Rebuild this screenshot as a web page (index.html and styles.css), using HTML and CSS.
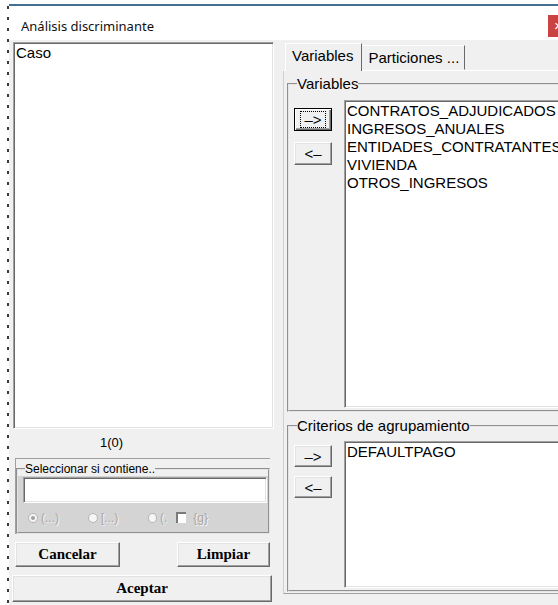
FILE: index.html
```html
<!DOCTYPE html>
<html lang="es">
<head>
<meta charset="utf-8">
<title>Análisis discriminante</title>
<link rel="stylesheet" href="styles.css">
</head>
<body>
<div class="desk">
  <div class="edge"></div>
  <div class="window">
    <div class="titlebar">
      <span class="title">Análisis discriminante</span>
      <span class="close">×</span>
    </div>
    <div class="client">
      <div class="left">
        <div class="listbox sunken cases">
          <div class="item">Caso</div>
        </div>
        <div class="count">1(0)</div>
        <div class="filter-panel">
          <fieldset class="filter">
            <legend>Seleccionar si contiene..</legend>
            <div class="filter-body">
              <div class="textbox sunken"></div>
              <div class="options">
                <span class="opt"><span class="radio on"></span><span class="dim">(...)</span></span>
                <span class="opt"><span class="radio"></span><span class="dim">[...)</span></span>
                <span class="opt"><span class="radio"></span><span class="dim">(.</span><span class="check"></span><span class="dim g">{g}</span></span>
              </div>
            </div>
          </fieldset>
        </div>
        <div class="btn-row">
          <button class="btn cancel">Cancelar</button>
          <button class="btn clear">Limpiar</button>
        </div>
        <button class="btn accept">Aceptar</button>
      </div>
      <div class="right">
        <div class="tabs">
          <span class="tab active">Variables</span>
          <span class="tab">Particiones ...</span>
        </div>
        <div class="tabpanel">
          <fieldset class="group vars">
            <legend>Variables</legend>
            <div class="group-body">
              <div class="movers">
                <button class="mv default"><span class="focus">–&gt;</span></button>
                <button class="mv">&lt;–</button>
              </div>
              <div class="listbox sunken">
                <div class="item">CONTRATOS_ADJUDICADOS</div>
                <div class="item">INGRESOS_ANUALES</div>
                <div class="item">ENTIDADES_CONTRATANTES</div>
                <div class="item">VIVIENDA</div>
                <div class="item">OTROS_INGRESOS</div>
              </div>
            </div>
          </fieldset>
          <fieldset class="group crit">
            <legend>Criterios de agrupamiento</legend>
            <div class="group-body">
              <div class="movers">
                <button class="mv">–&gt;</button>
                <button class="mv">&lt;–</button>
              </div>
              <div class="listbox sunken">
                <div class="item">DEFAULTPAGO</div>
              </div>
            </div>
          </fieldset>
        </div>
      </div>
    </div>
  </div>
</div>
</body>
</html>
```
FILE: styles.css
```css
* { box-sizing: border-box; }

body {
  margin: 0;
  background: #fff;
  overflow: hidden;
  font-family: "Liberation Sans", Arial, sans-serif;
  font-size: 15px;
  color: #000;
}

.desk {
  display: flex;
  width: 620px;
  height: 605px;
}

/* dotted edge of the window behind */
.edge {
  width: 2px;
  margin: 6px 0 0 7px;
  background: repeating-linear-gradient(to bottom, #3a3a3a 0 3px, transparent 3px 11px);
}

.window {
  width: 585px;
  flex: none;
  margin-top: 4px;
  border-top: 2px solid #456f90;
  display: flex;
  flex-direction: column;
}

.titlebar {
  height: 34px;
  background: #fff;
  display: flex;
  align-items: flex-start;
}

.title {
  padding: 11px 0 0 12px;
  font: 13px/18px "Noto Sans", "Open Sans", sans-serif;
  color: #111;
}

.close {
  margin-left: auto;
  margin-top: 9px;
  width: 46px;
  height: 22px;
  background: #c94343;
  color: #fff;
  font: 15px/22px "Liberation Sans", sans-serif;
  padding-left: 6px;
}

.client {
  flex: 1;
  background: #f0f0f0;
  display: flex;
  padding-left: 3px;
}

/* 3D frames */
.sunken {
  border: 1px solid;
  border-color: #a0a0a0 #fff #fff #a0a0a0;
  box-shadow: inset 1px 1px 0 #696969, inset -1px -1px 0 #e3e3e3;
  background: #fff;
}

.btn, .mv {
  font: inherit;
  background: #f0f0f0;
  border: 1px solid;
  border-color: #fff #696969 #696969 #fff;
  box-shadow: inset -1px -1px 0 #a0a0a0, inset 1px 1px 0 #e3e3e3;
  padding: 0;
  color: #000;
}

/* left column */
.left {
  width: 262px;
  display: flex;
  flex-direction: column;
}

.listbox {
  padding: 1px 2px;
  line-height: 18px;
  white-space: nowrap;
  overflow: hidden;
}

.cases {
  margin: 2px 0 0 1px;
  height: 387px;
}

.count {
  height: 28px;
  line-height: 28px;
  font-size: 13px;
  padding-left: 88px;
}

.filter-panel {
  margin: 1px 4px 0 3px;
  border-top: 1px solid #a0a0a0;
  border-left: 1px solid #a0a0a0;
  padding-top: 3px;
}

.filter {
  margin: 0;
  padding: 0;
  border: 2px groove #e4e4e4;
  min-width: 0;
}

.filter legend {
  font-size: 12px;
  line-height: 14px;
  padding: 0;
  margin-left: 7px;
}

.filter-body {
  background: #d4d4d4;
  padding: 1px 1px 0 5px;
}

.textbox {
  height: 26px;
}

.options {
  height: 29px;
  display: flex;
  align-items: center;
  padding-left: 5px;
}

.opt {
  width: 60px;
  display: inline-flex;
  align-items: center;
  font-size: 12px;
}

.radio {
  width: 10px;
  height: 10px;
  border-radius: 50%;
  background: #f6f6f6;
  border: 1px solid #b4b4b4;
  margin-right: 3px;
  display: inline-flex;
  align-items: center;
  justify-content: center;
}

.radio.on::after {
  content: "";
  width: 4px;
  height: 4px;
  border-radius: 50%;
  background: #a0a0a0;
}

.dim {
  color: #a8a8a8;
  text-shadow: 1px 1px 0 #f4f4f4;
}

.check {
  width: 11px;
  height: 11px;
  margin-left: 9px;
  background: #fff;
  border-top: 2px solid #7a7a7a;
  border-left: 2px solid #7a7a7a;
}

.dim.g {
  margin-left: 7px;
}

.btn-row {
  margin: 8px 4px 0 3px;
  display: flex;
  justify-content: space-between;
}

.btn {
  height: 25px;
  font: bold 15px "Liberation Serif", "Times New Roman", serif;
}

.cancel { width: 105px; }
.clear { width: 93px; }

.accept {
  margin-top: 8px;
  width: 260px;
  height: 27px;
}

/* right column with tabs */
.right {
  margin-left: 9px;
  flex: 1;
  padding-top: 3px;
  display: flex;
  flex-direction: column;
  height: 554px;
}

.tabs {
  display: flex;
  align-items: flex-end;
  padding-left: 2px;
}

.tab {
  background: #f0f0f0;
  border: 1px solid;
  border-color: #fff #696969 transparent #fff;
  line-height: 17px;
  white-space: nowrap;
}

.tab.active {
  position: relative;
  z-index: 1;
  height: 28px;
  margin-bottom: -1px;
  padding: 3px 8px 0 6px;
  border-bottom: none;
}

.tab:not(.active) {
  height: 25px;
  padding: 3px 5px 0 5px;
  border-left-color: #f0f0f0;
}

.tabpanel {
  flex: 1;
  border: 1px solid;
  border-color: #fff #a0a0a0 #a0a0a0 #d0d0d0;
  padding: 4px 0 1px 3px;
}

.group {
  margin: 0;
  padding: 0 0 2px 3px;
  border: 2px groove #e4e4e4;
  border-right: none;
  min-width: 0;
}

.group legend {
  line-height: 17px;
  padding: 0;
  margin-left: 5px;
}

.group-body {
  display: flex;
}

.movers {
  width: 38px;
  margin-left: 2px;
  display: flex;
  flex-direction: column;
}

.mv {
  height: 23px;
  font: 15px "Liberation Sans", Arial, sans-serif;
  line-height: 19px;
}

.group-body .listbox {
  flex: 1;
  margin-left: 12px;
  padding: 1px 2px;
}

.vars .group-body { padding-top: 8px; }
.vars .movers { padding-top: 8px; gap: 11px; }
.vars .listbox { height: 308px; }

.crit { margin-top: 5px; }
.crit .group-body { padding-top: 7px; }
.crit .movers { padding-top: 4px; gap: 9px; }
.crit .mv { height: 22px; }
.crit .listbox { height: 147px; }

.mv.default {
  border-color: #000;
  box-shadow: inset 1px 1px 0 #fff, inset -1px -1px 0 #696969, inset -2px -2px 0 #a0a0a0;
}

.focus {
  display: inline-block;
  outline: 1px dotted #000;
  outline-offset: 0;
  padding: 0 3px;
  line-height: 15px;
}
```
